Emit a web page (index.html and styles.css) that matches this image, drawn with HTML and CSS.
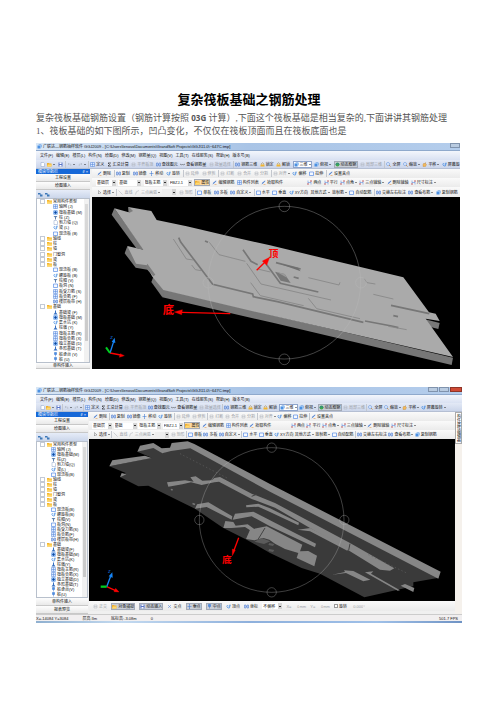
FILE: index.html
```html
<!DOCTYPE html>
<html lang="zh-CN">
<head>
<meta charset="utf-8">
<meta name="viewport" content="width=device-width, initial-scale=1">
<title>复杂筏板基础之钢筋处理</title>
<link rel="stylesheet" href="styles.css">
</head>
<body>
<svg class="sprite" aria-hidden="true">
<symbol id="new" viewBox="0 0 10 10"><path d="M2 1h5l2 2v6H2z" fill="#fff" stroke="#8aa0c8"/></symbol>
<symbol id="open" viewBox="0 0 10 10"><path d="M0 2h4l1 1h4v6H0z" fill="#f0b030"/><path d="M2 5h8L8 9H0z" fill="#ffd970"/></symbol>
<symbol id="save" viewBox="0 0 10 10"><path d="M1 1h8v8H1z" fill="#5a76c8"/><path d="M3 1h4v3H3zM3 6h4v3H3z" fill="#fff"/></symbol>
<symbol id="undo" viewBox="0 0 10 10"><path d="M2 4h5q2 2 0 4M4 2L2 4l2 2" fill="none" stroke="#a9b0bd"/></symbol>
<symbol id="redo" viewBox="0 0 10 10"><path d="M8 4H3q-2 2 0 4M6 2l2 2-2 2" fill="none" stroke="#a9b0bd"/></symbol>
<symbol id="grid" viewBox="0 0 10 10"><path d="M1 1h8v8H1z" fill="#dce9ff" stroke="#4f83d8"/><path d="M1 5h8M5 1v8" stroke="#4f83d8"/></symbol>
<symbol id="sum" viewBox="0 0 10 10"><path d="M8 2H2l3 3-3 3h6" fill="none" stroke="#222" stroke-width="1.3"/></symbol>
<symbol id="off" viewBox="0 0 10 10"><path d="M2 2h6v6H2zM2 5h6" fill="none" stroke="#adb2ba"/></symbol>
<symbol id="find" viewBox="0 0 10 10"><path d="M1 2h3v6H1zM6 2h3v6H6zM4 5h2" fill="#cfe0ff" stroke="#3f6fc4"/></symbol>
<symbol id="eye" viewBox="0 0 10 10"><path d="M0 4l3 2 2-2 2 2 3-2" fill="none" stroke="#333"/></symbol>
<symbol id="lock" viewBox="0 0 10 10"><path d="M3 5V3q2-3 4 0v2" fill="none" stroke="#a07a20"/><path d="M1 5h8v4H1z" fill="#f2b632"/></symbol>
<symbol id="cube" viewBox="0 0 10 10"><path d="M1 3l3-2h5v5L7 9H1z" fill="#4b90e2"/><path d="M1 3h6v6M7 3l2-2" fill="none" stroke="#d5e8ff"/></symbol>
<symbol id="orbit" viewBox="0 0 10 10"><circle cx="5" cy="5" r="4" fill="#3fa94d"/><path d="M1 5q4-4 8 0" fill="none" stroke="#1f5ec0"/></symbol>
<symbol id="zoom" viewBox="0 0 10 10"><circle cx="4" cy="4" r="3" fill="#e6f2ff" stroke="#4f83d8"/><path d="M6 6l3 3" stroke="#c08030" stroke-width="1.5"/></symbol>
<symbol id="hand" viewBox="0 0 10 10"><path d="M2 9V5l2-3 1 2 2-3v3l2 1-2 4z" fill="#f3b95c" stroke="#b07820" stroke-width=".6"/></symbol>
<symbol id="pen" viewBox="0 0 10 10"><path d="M1 9l2-4 5-4 1 1-5 5z" fill="#4c7ed0"/><path d="M5 9h4" stroke="#e08a30"/></symbol>
<symbol id="move" viewBox="0 0 10 10"><path d="M5 1v8M1 5h8M4 2l1-1 1 1M4 8l1 1 1-1" fill="none" stroke="#2f6fd0"/></symbol>
<symbol id="rot" viewBox="0 0 10 10"><path d="M3 2q-3 4 1 6t4-5M8 1v3H5" fill="none" stroke="#2f7fe0" stroke-width="1.3"/></symbol>
<symbol id="line" viewBox="0 0 10 10"><path d="M1 1l8 8" stroke="#a9adb5"/></symbol>
<symbol id="arc" viewBox="0 0 10 10"><path d="M1 9q0-7 7-8" fill="none" stroke="#a9adb5"/></symbol>
<symbol id="sel" viewBox="0 0 10 10"><path d="M3 1v7l2-2 3 0z" fill="#fff" stroke="#555" stroke-width=".8"/></symbol>
<symbol id="pt" viewBox="0 0 10 10"><path d="M2 1v8M8 1v8M2 5h6" stroke="#4f83d8"/><circle cx="2" cy="8" r="1.4" fill="#d84a3a"/><circle cx="8" cy="2" r="1.4" fill="#d84a3a"/></symbol>
<symbol id="link" viewBox="0 0 10 10"><path d="M0 2h5v3H0zM4 5h5v4H4z" fill="#3d78b8"/></symbol>
<symbol id="box" viewBox="0 0 10 10"><path d="M1 2h8v7H1z" fill="#f4f8ff" stroke="#3f7be0" stroke-width="1.2"/></symbol>
<symbol id="cross" viewBox="0 0 10 10"><path d="M2 2l6 6M8 2L2 8" stroke="#4f83d8"/></symbol>
<symbol id="pin" viewBox="0 0 10 10"><path d="M3 1h4v4H3zM5 5v4" fill="#4b90e2" stroke="#2f6fd0"/></symbol>
<symbol id="cap" viewBox="0 0 10 10"><path d="M1 2h8L6 5v4H4V5z" fill="#5b7fae"/></symbol>
<symbol id="raft" viewBox="0 0 10 10"><path d="M1 1h8v8H1z" fill="#2f7be0"/><path d="M2 2l6 6M8 2L2 8" stroke="#fff"/><circle cx="5" cy="5" r="1.8" fill="#18478f"/></symbol>
<symbol id="foot" viewBox="0 0 10 10"><path d="M4 1h2v4l3 4H1l3-4z" fill="#356fc2"/></symbol>
<symbol id="fold" viewBox="0 0 10 10"><path d="M0 2h4l1 1h5v6H0z" fill="#f5b52e"/><path d="M0 5h10v4H0z" fill="#ffd768"/></symbol>
</svg>
<main>
<h1>复杂筏板基础之钢筋处理</h1>
<p>复杂筏板基础钢筋设置（钢筋计算按照 <b>03G</b> 计算）,下面这个筏板基础是相当复杂的,下面讲讲其钢筋处理</p>
<p>1、筏板基础的如下图所示，凹凸变化，不仅仅在筏板顶面而且在筏板底面也是</p>

<section class="app first">
<header class="title"><svg class="i"><use href="#cube"/></svg><span>广联达—钢筋抽样软件 GGJ2009 - [C:\Users\lenovo\Documents\GrandSoft Projects\GGJ\11.0\~647C.tmp]</span><i class="win"></i></header>
<nav class="menu"><a href="#">文件(F)</a><a href="#">编辑(E)</a><a href="#">楼层(L)</a><a href="#">构件(N)</a><a href="#">绘图(D)</a><a href="#">修改(M)</a><a href="#">钢筋量(Q)</a><a href="#">视图(V)</a><a href="#">工具(T)</a><a href="#">在线服务(S)</a><a href="#">帮助(H)</a><a href="#">版本号(B)</a></nav>
<div class="bar main"><button aria-label="新建"><svg class="i"><use href="#new"/></svg></button><button aria-label="打开" class="dd"><svg class="i"><use href="#open"/></svg></button><button aria-label="保存"><svg class="i"><use href="#save"/></svg></button><button aria-label="撤销" class="dd dim sep"><svg class="i"><use href="#undo"/></svg></button><button aria-label="恢复" class="dd dim"><svg class="i"><use href="#redo"/></svg></button><button class="sep"><svg class="i"><use href="#grid"/></svg>定义</button><button><svg class="i"><use href="#sum"/></svg>汇总计算</button><button class="dim"><svg class="i"><use href="#off"/></svg>平齐板顶</button><button><svg class="i"><use href="#find"/></svg>查找图元</button><button><svg class="i"><use href="#eye"/></svg>查看钢筋量</button><button class="dim"><svg class="i"><use href="#off"/></svg>批量选择</button><button class="sep"><svg class="i"><use href="#find"/></svg>钢筋三维</button><button><svg class="i"><use href="#lock"/></svg>锁定</button><button><svg class="i"><use href="#lock"/></svg>解锁</button><button class="dd white"><svg class="i"><use href="#cube"/></svg>三维</button><button class="dd"><svg class="i"><use href="#cube"/></svg>俯视</button><button class="on"><svg class="i"><use href="#orbit"/></svg>动态观察</button><button class="dim"><svg class="i"><use href="#off"/></svg>局部三维</button><button class="sep"><svg class="i"><use href="#zoom"/></svg>全屏</button><button class="dd"><svg class="i"><use href="#zoom"/></svg>缩放</button><button class="dd"><svg class="i"><use href="#hand"/></svg>平移</button><button><svg class="i"><use href="#rot"/></svg>屏幕旋</button></div>
<div class="work">
<aside>
<div class="head"><span>模块导航栏</span><span>♯ ×</span></div>
<button class="tab">工程设置</button><button class="tab">绘图输入</button>
<div class="tools"><svg class="i"><use href="#link"/></svg><svg class="i"><use href="#link"/></svg></div>
<div class="treebox"><ul class="tree">
<li class="top open"><svg class="i"><use href="#fold"/></svg>常用构件类型</li>
<li><svg class="i"><use href="#grid"/></svg>轴网 (J)</li><li><svg class="i"><use href="#raft"/></svg>筏板基础 (M)</li><li><svg class="i"><use href="#cap"/></svg>柱 (Z)</li><li><svg class="i"><use href="#new"/></svg>剪力墙 (Q)</li><li><svg class="i"><use href="#rot"/></svg>梁 (L)</li><li><svg class="i"><use href="#box"/></svg>现浇板 (B)</li>
<li class="top"><svg class="i"><use href="#fold"/></svg>轴线</li><li class="top"><svg class="i"><use href="#fold"/></svg>柱</li><li class="top"><svg class="i"><use href="#fold"/></svg>墙</li><li class="top"><svg class="i"><use href="#fold"/></svg>门窗洞</li><li class="top"><svg class="i"><use href="#fold"/></svg>梁</li><li class="top open"><svg class="i"><use href="#fold"/></svg>板</li>
<li><svg class="i"><use href="#box"/></svg>现浇板 (B)</li><li><svg class="i"><use href="#rot"/></svg>螺旋板 (B)</li><li><svg class="i"><use href="#cap"/></svg>柱帽 (V)</li><li><svg class="i"><use href="#box"/></svg>板洞 (N)</li><li><svg class="i"><use href="#grid"/></svg>板受力筋 (S)</li><li><svg class="i"><use href="#grid"/></svg>板负筋 (F)</li><li><svg class="i"><use href="#find"/></svg>楼层板带 (H)</li>
<li class="top open"><svg class="i"><use href="#fold"/></svg>基础</li>
<li><svg class="i"><use href="#foot"/></svg>基础梁 (F)</li><li><svg class="i"><use href="#raft"/></svg>筏板基础 (M)</li><li><svg class="i"><use href="#rot"/></svg>集水坑 (K)</li><li><svg class="i"><use href="#foot"/></svg>柱墩 (Y)</li><li><svg class="i"><use href="#grid"/></svg>筏板主筋 (R)</li><li><svg class="i"><use href="#grid"/></svg>筏板负筋 (X)</li><li><svg class="i"><use href="#raft"/></svg>独立基础 (D)</li><li><svg class="i"><use href="#foot"/></svg>条形基础 (T)</li><li><svg class="i"><use href="#pin"/></svg>桩承台 (V)</li><li><svg class="i"><use href="#pin"/></svg>桩 (U)</li>
</ul><i class="scroll"></i></div>
<button class="tab cut">单构件输入</button>
</aside>
<div class="stage">
<div class="bar r2"><button><svg class="i"><use href="#pen"/></svg>删除</button><button class="sep"><svg class="i"><use href="#find"/></svg>复制</button><button><svg class="i"><use href="#find"/></svg>镜像</button><button><svg class="i"><use href="#move"/></svg>移动</button><button><svg class="i"><use href="#rot"/></svg>旋转</button><button class="sep dim"><svg class="i"><use href="#off"/></svg>延伸</button><button class="dim"><svg class="i"><use href="#off"/></svg>修剪</button><button class="sep dim"><svg class="i"><use href="#off"/></svg>打断</button><button class="dim"><svg class="i"><use href="#off"/></svg>合并</button><button class="dim"><svg class="i"><use href="#off"/></svg>分割</button><button class="dd dim sep"><svg class="i"><use href="#off"/></svg>对齐</button><button><svg class="i"><use href="#rot"/></svg>偏移</button><button><svg class="i"><use href="#box"/></svg>拉伸</button><button class="sep"><svg class="i"><use href="#pen"/></svg>设置夹点</button></div>
<div class="bar r3"><select aria-label="楼层"><option>基础层</option></select><select aria-label="类型" class="wide"><option>基础</option></select><select aria-label="构件" class="wide"><option>筏板主筋</option></select><select aria-label="名称" class="wide"><option>FBZJ-1</option></select><button class="on warm"><svg class="i"><use href="#open"/></svg>属性</button><button><svg class="i"><use href="#pen"/></svg>编辑钢筋</button><button><svg class="i"><use href="#grid"/></svg>构件列表</button><button><svg class="i"><use href="#pen"/></svg>拾取构件</button><button class="far"><svg class="i"><use href="#pt"/></svg>两点</button><button><svg class="i"><use href="#pt"/></svg>平行</button><button class="dd"><svg class="i"><use href="#pt"/></svg>点角</button><button class="dd"><svg class="i"><use href="#pt"/></svg>三点辅轴</button><button><svg class="i"><use href="#pen"/></svg>删除辅轴</button><button class="dd"><svg class="i"><use href="#pt"/></svg>尺寸标注</button></div>
<div class="bar r4"><button class="dd"><svg class="i"><use href="#sel"/></svg>选择</button><button class="sep dim"><svg class="i"><use href="#line"/></svg>直线</button><button class="dd dim"><svg class="i"><use href="#arc"/></svg>三点画弧</button><select aria-label="半径" class="blank"><option></option></select><button class="dim"><svg class="i"><use href="#off"/></svg>矩形</button><button class="sep"><svg class="i"><use href="#box"/></svg>单板</button><button><svg class="i"><use href="#find"/></svg>多板</button><button class="dd"><svg class="i"><use href="#find"/></svg>自定义</button><button class="sep"><svg class="i"><use href="#box"/></svg>水平</button><button><svg class="i"><use href="#box"/></svg>垂直</button><button><svg class="i"><use href="#rot"/></svg>XY方向</button><button class="dd">其他方式</button><button class="dd">放射筋</button><button><svg class="i"><use href="#box"/></svg>自动配筋</button><button class="sep"><svg class="i"><use href="#find"/></svg>交换左右标注</button><button class="dd"><svg class="i"><use href="#find"/></svg>查看布筋</button><button><svg class="i"><use href="#cube"/></svg>复制钢筋</button></div>
<svg class="view" viewBox="21 48 1104 516" role="img" aria-label="筏板顶面三维图">
<path d="M21 48h1104v516H21z" fill="#000"/>
<g fill="#777"><path d="M88 82l-8 19 74 101 24 5z"/><path d="M127 196l-8 21 33 43 35 6 14 17 12-2-20-45z"/><path d="M208 280l-9 23 33 46 14-22z"/><path d="M240 326l-8 23 338 78 530 125 4-22z"/><path d="M1020 415l44 11-4 18-32-8z"/></g>
<path d="M88 82l43 12-1-16 69 12 16 27 90 19 115 27 135 30 400 96 77 105 20 4 12 22-42-7 82 115-560-128-309-73-34-41-15-33-33-5-26-53 48 11z" fill="#aaa"/>
<path d="M132 78l12 12-12 6zM187 248l24 33-6 5-22-26z" fill="#7c7c7c"/>
<g fill="none" stroke="#777" stroke-width="5"><path d="M281 170l6 13 96 127 120 29 2 8 72 15 258 62"/><path d="M360 180l9 4M474 206l24 35 20 10M544 250l42 57 114 26M573 245l74 19M840 420l80 15 20 5M918 373l115 25M925 404l14 3M626 288l15 4"/></g>
<g fill="none" stroke="#858585" stroke-width="2.5"><path d="M265 174l39 60 21 3M320 252l11 14 17 3M373 184l29 37 79 20M485 247l43 62 210 48M497 305l29 39 130 30M670 290l92 22 3-8M670 352l25 31 130 30M838 293l8 12 25 4M865 340l60 14M518 264l38 9M910 436l55 10"/></g>
<path d="M570 272l29 7 18 27-30-7z" fill="#777"/><path d="M574 272l25 7 7 11z" fill="#999"/><path d="M575 245l64 15 8 11z" fill="#6f6f6f"/>
<g fill="none" stroke="#bbb" stroke-opacity=".55" stroke-width="2"><circle cx="598" cy="305" r="229"/><circle cx="598" cy="76" r="16"/><circle cx="598" cy="535" r="16"/><circle cx="370" cy="305" r="16"/><circle cx="828" cy="305" r="16"/></g>
<g fill="red" stroke="red"><path d="M436 398L290 394" stroke-width="4"/><path d="M268 393l24-7-2 15z"/><path d="M515 268l29-29" stroke-width="4"/><path d="M554 229l-9 24-13-13z"/><path d="M75 516l32 6" stroke-width="4"/><path d="M118 524l-15 5 3-11z"/></g>
<path d="M75 516l11-34" stroke="#1684f5" stroke-width="4"/><path d="M89 470l2 16-11-4z" fill="#1684f5"/><path d="M75 516l-12-17" stroke="#0c2" stroke-width="6"/>
<text x="76" y="473" class="axis">Z</text><text x="551" y="229" class="mark">顶</text><text x="233" y="400" class="mark big">底</text>
</svg>
</div>
</div>
</section>

<section class="app second">
<header class="title"><svg class="i"><use href="#cube"/></svg><span>广联达—钢筋抽样软件 GGJ2009 - [C:\Users\lenovo\Documents\GrandSoft Projects\GGJ\11.0\~647C.tmp]</span><i class="win"></i><i class="win"></i><i class="win close"></i></header>
<nav class="menu"><a href="#">文件(F)</a><a href="#">编辑(E)</a><a href="#">楼层(L)</a><a href="#">构件(N)</a><a href="#">绘图(D)</a><a href="#">修改(M)</a><a href="#">钢筋量(Q)</a><a href="#">视图(V)</a><a href="#">工具(T)</a><a href="#">在线服务(S)</a><a href="#">帮助(H)</a><a href="#">版本号(B)</a></nav>
<div class="bar main"><button aria-label="新建"><svg class="i"><use href="#new"/></svg></button><button aria-label="打开" class="dd"><svg class="i"><use href="#open"/></svg></button><button aria-label="保存"><svg class="i"><use href="#save"/></svg></button><button aria-label="撤销" class="dd dim sep"><svg class="i"><use href="#undo"/></svg></button><button aria-label="恢复" class="dd dim"><svg class="i"><use href="#redo"/></svg></button><button class="sep"><svg class="i"><use href="#grid"/></svg>定义</button><button><svg class="i"><use href="#sum"/></svg>汇总计算</button><button class="dim"><svg class="i"><use href="#off"/></svg>平齐板顶</button><button><svg class="i"><use href="#find"/></svg>查找图元</button><button><svg class="i"><use href="#eye"/></svg>查看钢筋量</button><button class="dim"><svg class="i"><use href="#off"/></svg>批量选择</button><button class="sep"><svg class="i"><use href="#find"/></svg>钢筋三维</button><button><svg class="i"><use href="#lock"/></svg>锁定</button><button><svg class="i"><use href="#lock"/></svg>解锁</button><button class="dd white"><svg class="i"><use href="#cube"/></svg>三维</button><button class="dd"><svg class="i"><use href="#cube"/></svg>俯视</button><button class="on"><svg class="i"><use href="#orbit"/></svg>动态观察</button><button class="dim"><svg class="i"><use href="#off"/></svg>局部三维</button><button class="sep"><svg class="i"><use href="#zoom"/></svg>全屏</button><button class="dd"><svg class="i"><use href="#zoom"/></svg>缩放</button><button class="dd"><svg class="i"><use href="#hand"/></svg>平移</button><button class="dd"><svg class="i"><use href="#rot"/></svg>屏幕旋转</button></div>
<div class="work">
<aside>
<div class="head"><span>模块导航栏</span><span>♯ ×</span></div>
<button class="tab">工程设置</button><button class="tab">绘图输入</button>
<div class="tools"><svg class="i"><use href="#link"/></svg><svg class="i"><use href="#link"/></svg></div>
<div class="treebox"><ul class="tree">
<li class="top open"><svg class="i"><use href="#fold"/></svg>常用构件类型</li>
<li><svg class="i"><use href="#grid"/></svg>轴网 (J)</li><li><svg class="i"><use href="#raft"/></svg>筏板基础(M)</li><li><svg class="i"><use href="#cap"/></svg>柱(Z)</li><li><svg class="i"><use href="#new"/></svg>剪力墙(Q)</li><li><svg class="i"><use href="#rot"/></svg>梁(L)</li><li><svg class="i"><use href="#box"/></svg>现浇板(B)</li>
<li class="top"><svg class="i"><use href="#fold"/></svg>轴线</li><li class="top"><svg class="i"><use href="#fold"/></svg>柱</li><li class="top"><svg class="i"><use href="#fold"/></svg>墙</li><li class="top"><svg class="i"><use href="#fold"/></svg>门窗洞</li><li class="top"><svg class="i"><use href="#fold"/></svg>梁</li><li class="top open"><svg class="i"><use href="#fold"/></svg>板</li>
<li><svg class="i"><use href="#box"/></svg>现浇板(B)</li><li><svg class="i"><use href="#rot"/></svg>螺旋板(B)</li><li><svg class="i"><use href="#cap"/></svg>柱帽(V)</li><li><svg class="i"><use href="#box"/></svg>板洞(N)</li><li><svg class="i"><use href="#grid"/></svg>板受力筋(S)</li><li><svg class="i"><use href="#grid"/></svg>板负筋(F)</li><li><svg class="i"><use href="#find"/></svg>楼层板带(H)</li>
<li class="top open"><svg class="i"><use href="#fold"/></svg>基础</li>
<li><svg class="i"><use href="#foot"/></svg>基础梁(F)</li><li><svg class="i"><use href="#raft"/></svg>筏板基础(M)</li><li><svg class="i"><use href="#rot"/></svg>集水坑(K)</li><li><svg class="i"><use href="#foot"/></svg>柱墩(Y)</li><li><svg class="i"><use href="#grid"/></svg>筏板主筋(R)</li><li><svg class="i"><use href="#grid"/></svg>筏板负筋(X)</li><li><svg class="i"><use href="#raft"/></svg>独立基础(D)</li><li><svg class="i"><use href="#foot"/></svg>条形基础(T)</li><li><svg class="i"><use href="#pin"/></svg>桩承台(V)</li><li><svg class="i"><use href="#pin"/></svg>桩(U)</li>
</ul><i class="scroll"></i></div>
<button class="tab">单构件输入</button><button class="tab">报表预览</button>
</aside>
<div class="stage">
<div class="bar r2"><button><svg class="i"><use href="#pen"/></svg>删除</button><button class="sep"><svg class="i"><use href="#find"/></svg>复制</button><button><svg class="i"><use href="#find"/></svg>镜像</button><button><svg class="i"><use href="#move"/></svg>移动</button><button><svg class="i"><use href="#rot"/></svg>旋转</button><button class="sep dim"><svg class="i"><use href="#off"/></svg>延伸</button><button class="dim"><svg class="i"><use href="#off"/></svg>修剪</button><button class="sep dim"><svg class="i"><use href="#off"/></svg>打断</button><button class="dim"><svg class="i"><use href="#off"/></svg>合并</button><button class="dim"><svg class="i"><use href="#off"/></svg>分割</button><button class="dd dim sep"><svg class="i"><use href="#off"/></svg>对齐</button><button><svg class="i"><use href="#rot"/></svg>偏移</button><button><svg class="i"><use href="#box"/></svg>拉伸</button><button class="sep"><svg class="i"><use href="#pen"/></svg>设置夹点</button></div>
<div class="bar r3"><select aria-label="楼层"><option>基础层</option></select><select aria-label="类型" class="wide"><option>基础</option></select><select aria-label="构件" class="wide"><option>筏板主筋</option></select><select aria-label="名称"><option>FBZJ-1</option></select><button class="on warm"><svg class="i"><use href="#open"/></svg>属性</button><button><svg class="i"><use href="#pen"/></svg>编辑钢筋</button><button><svg class="i"><use href="#grid"/></svg>构件列表</button><button><svg class="i"><use href="#pen"/></svg>拾取构件</button><button class="far"><svg class="i"><use href="#pt"/></svg>两点</button><button><svg class="i"><use href="#pt"/></svg>平行</button><button class="dd"><svg class="i"><use href="#pt"/></svg>点角</button><button class="dd"><svg class="i"><use href="#pt"/></svg>三点辅轴</button><button><svg class="i"><use href="#pen"/></svg>删除辅轴</button><button class="dd"><svg class="i"><use href="#pt"/></svg>尺寸标注</button></div>
<div class="bar r4"><button class="dd"><svg class="i"><use href="#sel"/></svg>选择</button><button class="sep dim"><svg class="i"><use href="#line"/></svg>直线</button><button class="dd dim"><svg class="i"><use href="#arc"/></svg>三点画弧</button><select aria-label="半径" class="blank"><option></option></select><button class="dim"><svg class="i"><use href="#off"/></svg>矩形</button><button class="sep"><svg class="i"><use href="#box"/></svg>单板</button><button><svg class="i"><use href="#find"/></svg>多板</button><button class="dd"><svg class="i"><use href="#find"/></svg>自定义</button><button class="sep"><svg class="i"><use href="#box"/></svg>水平</button><button><svg class="i"><use href="#box"/></svg>垂直</button><button><svg class="i"><use href="#rot"/></svg>XY方向</button><button class="dd">其他方式</button><button class="dd">放射筋</button><button><svg class="i"><use href="#box"/></svg>自动配筋</button><button class="sep"><svg class="i"><use href="#find"/></svg>交换左右标注</button><button class="dd"><svg class="i"><use href="#find"/></svg>查看布筋</button><button><svg class="i"><use href="#cube"/></svg>复制钢筋</button></div>
<svg class="view" viewBox="12 8 1098 487" role="img" aria-label="筏板底面三维图">
<path d="M12 8h1098v487H12z" fill="#000"/>
<path d="M73 90L200 64 157 46 205 30 232 50 300 25 555 155 1062 424 985 438 985 450 838 483 705 412 650 395 555 350 485 310 415 275 330 217 190 148 160 150 105 122 122 110z" fill="#3a3a3a"/>
<g fill="#868686">
<path d="M73 90L82 72 180 58 200 65z"/>
<path d="M105 123L110 110 124 114z"/>
<path d="M157 46L165 28 205 20 230 36 255 34 260 20 308 15 328 23 555 143 1067 406 1060 427 555 166 316 36 258 44 232 51 205 35z"/>
<path d="M246 138L300 132 326 136 316 123 332 120 352 133 380 132 388 125 405 122 500 172 570 200 795 320 928 396 915 403 885 400 795 345 570 214 500 188 402 136 388 138 350 146 318 138 292 144 250 151z"/>
<path d="M483 207L520 202 555 216 642 259 640 267 555 227 520 211 484 213z"/>
<path d="M638 280L676 275 790 335 787 343 675 285z"/>
<path d="M330 217L336 204 370 198 442 240 440 250 365 212z"/>
<path d="M443 250L450 232 505 226 555 252 693 322 690 333 555 270 500 240z"/>
<path d="M415 275L421 254 445 257 452 268 488 264 512 281 500 285 480 272 440 275z"/>
<path d="M483 308L495 280 545 270 652 325 645 345 670 344 696 358 688 390 635 365 640 350 600 338 570 322 553 310 535 305 508 312z"/>
<path d="M742 415L780 407 777 402 805 404 856 430 835 435 783 410z"/>
<path d="M840 408L865 405 858 412 945 462 938 463z"/>
<path d="M947 448L960 443 988 455 985 467z"/></g>
<g fill="none" stroke="#424242" stroke-width="3"><path d="M540 275L520 308M500 180l15-6M795 322l-4 20"/></g>
<g fill="#5b5b5b"><path d="M508 316L530 305 556 315 537 323zM553 320l15 3-4 6-14-3zM553 338l15 3-4 6-14-3z"/></g>
<g fill="#777"><path d="M323 199l8 3-2 5-7-3zM258 157l6 2-2 4-5-2z"/></g>
<path d="M285 52l145 75M850 355l115 55" fill="none" stroke="#606060" stroke-width="2" stroke-dasharray="4 7"/>
<g fill="none" stroke="#bbb" stroke-opacity=".5" stroke-width="2"><circle cx="560" cy="251" r="217"/><circle cx="560" cy="34" r="14"/><circle cx="560" cy="468" r="14"/><circle cx="343" cy="251" r="14"/><circle cx="778" cy="251" r="14"/></g>
<g fill="red" stroke="red"><path d="M461 304l-14 38" stroke-width="4"/><path d="M442 358l0-20 9 3z"/><path d="M65 451l27 12" stroke-width="4"/><path d="M102 467l-15-1 5-10z"/></g>
<path d="M65 451l12-31" stroke="#1684f5" stroke-width="4"/><path d="M82 408l1 16-12-4z" fill="#1684f5"/><path d="M65 451H47" stroke="#0c2" stroke-width="7"/>
<text x="69" y="410" class="axis">Z</text><text x="411" y="381" class="mark">底</text>
</svg>
<div class="bar snap"><button class="dim"><svg class="i"><use href="#off"/></svg>正交</button><button class="on"><svg class="i"><use href="#open"/></svg>对象捕捉</button><button class="on"><svg class="i"><use href="#save"/></svg>动态输入</button><button class="more"><svg class="i"><use href="#cross"/></svg>交点</button><button class="on"><svg class="i"><use href="#move"/></svg>垂点</button><button class="on"><svg class="i"><use href="#pin"/></svg>中点</button><button><svg class="i"><use href="#rot"/></svg>顶点</button><button><svg class="i"><use href="#find"/></svg>坐标</button><select aria-label="偏移方式"><option>不偏移</option></select><label class="dim">X=<input value="0">mm</label><label class="dim">Y=<input value="0">mm</label><label><input type="checkbox">旋转</label><label class="dim"><input class="ang" aria-label="角度" value="0.000">°</label></div>
</div>
<div class="rail"><button>构件属性编辑器</button></div>
</div>
<footer class="status"><span>X=-14084 Y=3084</span><span>层高:3m</span><span>底标高:-3.08m</span><span>0</span><span class="fps">501.7 FPS</span></footer>
<div class="task"></div>
</section>
</main>
</body>
</html>
```
FILE: styles.css
```css
* { box-sizing: border-box; }
body { margin: 0; background: #fff; color: #333; font-family: "Liberation Sans", "Noto Sans CJK SC", sans-serif; }
.sprite { position: absolute; width: 0; height: 0; }
main { padding: 89px 34px 0 36px; }
h1 { margin: 0 0 2px; font: bold 13px/20px "Noto Sans CJK SC", sans-serif; color: #000; text-align: center; }
p { margin: 0; font: 9px/13px "Liberation Serif", "Noto Sans CJK SC", serif; white-space: nowrap; color: #555; }
p b { font-family: "Noto Sans", sans-serif; font-size: 8px; }

.app { font-size: 4px; line-height: 5px; background: #f0f0f0; color: #111; }
.first { margin: 5px 2px 0 0; }
.second { margin-top: 18px; }
.app button, .app select, .app input { font: inherit; color: inherit; margin: 0; padding: 0; border: 0; background: none; border-radius: 0; }
.i { width: 5px; height: 5px; flex: none; }

.title { display: flex; align-items: center; gap: 1px; height: 8px; padding-left: 1px; background: linear-gradient(90deg, #d8e6f5, #a9c4e6 50%, #b4cdec); border-bottom: 1px solid #8fa9cc; }
.title span { flex: 1; white-space: nowrap; }
.win { width: 10px; height: 5px; background: #b9cbe0; border: 1px solid #8093ad; align-self: flex-start; }
.win.close { width: 12px; background: #d04a35; border-color: #8f3528; }
.menu { display: flex; align-items: center; gap: 3px; height: 9px; padding-left: 4px; background: linear-gradient(#f3f6fc, #d9e1f2); }
.menu a { color: inherit; text-decoration: none; white-space: nowrap; }
.second .title, .second .menu { height: 8px; }

.bar { display: flex; align-items: center; justify-content: space-between; height: 9px; background: linear-gradient(#fafafa, #ebebeb); }
.bar button { display: flex; align-items: center; gap: 1px; height: 7px; white-space: nowrap; }
.bar.main { padding-left: 4px; background: linear-gradient(#e3e9f6, #cbd5ea); border-bottom: 1px solid #b5bfd3; }
.bar .sep { border-left: 1px solid #c3c7ce; padding-left: 1px; }
.bar .dd::after { content: ""; border: 1px solid transparent; border-top-color: #222; border-bottom: 0; }
.bar .dim { color: #9a9ea6; }
.bar .on { background: #c9ced8; outline: 1px solid #a3aab7; outline-offset: -1px; padding: 0 1px; }
.bar .warm { background: #fbd9a0; }
.bar .white { background: #fff; outline: 1px solid #8ea4cc; outline-offset: -1px; padding: 0 1px; }
.bar .far { margin-left: 22px; }
.bar select { appearance: none; width: 20px; height: 6px; padding: 0 4px 0 1px; line-height: 5px; background: linear-gradient(#333, #333) right 1px center / 2px 1px no-repeat, linear-gradient(90deg, transparent calc(100% - 4px), #d5d5d5 0), #fff; }
.bar select.wide { width: 23px; }
.bar select.blank { width: 14px; background-color: #eee; }
.first .r2 { padding: 0 110px 0 5px; }
.first .r3 { padding: 0 24px 0 4px; }
.first .r4 { height: 10px; padding: 0 2px 0 5px; }
.second .main { padding-right: 16px; }
.second .r2 { padding: 0 122px 0 4px; }
.second .r3 { padding: 0 39px 0 3px; }
.second .r3 .far { margin-left: 18px; }
.second .r4 { padding: 0 18px 0 4px; }

.work { display: flex; }
aside { display: flex; flex-direction: column; width: 54px; flex: none; background: #f2f2f2; }
.second aside { width: 52px; }
.stage { flex: 1; min-width: 0; padding-left: 2px; }
.second .stage { padding-left: 1px; }
.view { display: block; width: 100%; height: auto; }
.head { display: flex; justify-content: space-between; height: 5px; padding: 0 2px; background: #1668d8; color: #fff; }
.app .tab { height: 8px; background: linear-gradient(#fdfdfd, #e9e9e9); border-bottom: 1px solid #c8c8c8; text-align: center; }
.app .tab.cut { height: 6px; overflow: hidden; }
.tools { display: flex; align-items: center; gap: 2px; height: 8px; padding-left: 2px; background: linear-gradient(#e6ecf8, #cbd6ea); }
.treebox { flex: 1; display: flex; background: #fff; border: 1px solid #b8c0cc; }
.tree { flex: 1; display: grid; grid-auto-rows: minmax(5px, 1fr); margin: 0; padding: 0; list-style: none; }
.tree li { display: flex; align-items: center; gap: 1px; padding-left: 16px; line-height: 5px; white-space: nowrap; }
.second .tree li { padding-left: 14px; }
.tree li.top, .second .tree li.top { padding-left: 3px; }
.tree .top::before { content: ""; flex: none; width: 3px; height: 3px; margin-right: 1px; border: 1px solid #c3cad6; background: #fff; }
.scroll { width: 5px; background: linear-gradient(#dadada, #c9c9c9) center 5px / 3px 84% no-repeat, #f1f1f1; }

.rail { width: 7px; background: #f5f1ec; }
.app .rail button { writing-mode: vertical-rl; width: 7px; height: 32px; background: #fff; border: 1px solid #aaa; line-height: 5px; white-space: nowrap; }
.snap { padding: 0 90px 0 4px; height: 10px; }
.snap label { display: flex; align-items: center; white-space: nowrap; }
.app .snap input { width: 8px; height: 5px; text-align: right; }
.app .snap .ang { width: 12px; }
.app .snap input[type="checkbox"] { appearance: none; width: 4px; height: 4px; margin-right: 1px; border: 1px solid #999; background: #fff; }
.status { display: flex; gap: 14px; height: 7px; align-items: center; border-top: 1px solid #ccc; background: #f1eff0; white-space: nowrap; }
.fps { margin-left: auto; padding-right: 4px; }
.task { height: 2px; background: linear-gradient(90deg, #8fb0d0, #c4daf0 20%, #8eb0dc 50%, #9fc0e8 80%, #6f93c4); }
.mark { font: bold 29px "Noto Sans CJK SC", sans-serif; fill: red; }
.mark.big { font-size: 34px; }
.axis { font: 13px "Liberation Sans", sans-serif; fill: #1684f5; }
```
